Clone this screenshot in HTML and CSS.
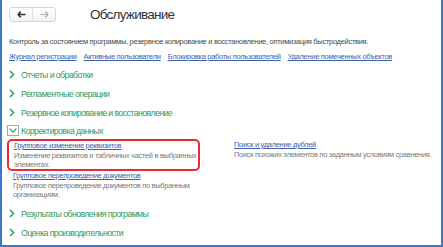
FILE: index.html
```html
<!DOCTYPE html>
<html lang="ru">
<head>
    <meta charset="UTF-8">
    <title>Обслуживание</title>
    <link rel="stylesheet" href="styles.css">
</head>
<body>
    <div class="window">
        <div class="header">
            <div class="nav">
                <span class="nav-btn">
                    <svg width="9" height="7" viewBox="0 0 9 7"><path d="M0.8 3.5H8.5M0.8 3.5L3.8 0.6M0.8 3.5L3.8 6.4" stroke="#333" stroke-width="1.5" fill="none"/></svg>
                </span>
                <span class="nav-btn">
                    <svg width="9" height="7" viewBox="0 0 9 7"><path d="M8.2 3.5H0.5M8.2 3.5L5.2 0.6M8.2 3.5L5.2 6.4" stroke="#aaa" stroke-width="1.2" fill="none"/></svg>
                </span>
            </div>
            <h1>Обслуживание</h1>
        </div>

        <p class="intro">Контроль за состоянием программы, резервное копирование и восстановление, оптимизация быстродействия.</p>

        <div class="links">
            <a href="#">Журнал регистрации</a>
            <a href="#">Активные пользователи</a>
            <a href="#">Блокировка работы пользователей</a>
            <a href="#">Удаление помеченных объектов</a>
        </div>

        <div class="group first"><svg class="chev" width="6" height="9" viewBox="0 0 6 9"><path d="M1 1L4.6 4.5L1 8" stroke="#2f9b5c" stroke-width="1.5" fill="none"/></svg>Отчеты и обработки</div>
        <div class="group"><svg class="chev" width="6" height="9" viewBox="0 0 6 9"><path d="M1 1L4.6 4.5L1 8" stroke="#2f9b5c" stroke-width="1.5" fill="none"/></svg>Регламентные операции</div>
        <div class="group"><svg class="chev" width="6" height="9" viewBox="0 0 6 9"><path d="M1 1L4.6 4.5L1 8" stroke="#2f9b5c" stroke-width="1.5" fill="none"/></svg>Резервное копирование и восстановление</div>
        <div class="group open">
            <span class="box">
                <svg width="8" height="5" viewBox="0 0 8 5"><path d="M0.7 0.7L4 4.2L7.3 0.7" stroke="#2f9b5c" stroke-width="1.2" fill="none"/></svg>
            </span>Корректировка данных
        </div>

        <div class="columns">
            <div class="col">
                <div class="item marked">
                    <a href="#">Групповое изменение реквизитов</a>
                    <p>Изменение реквизитов и табличных частей в выбранных элементах.</p>
                </div>
                <div class="item">
                    <a href="#">Групповое перепроведение документов</a>
                    <p>Групповое перепроведение документов по выбранным организациям.</p>
                </div>
            </div>
            <div class="col right">
                <div class="item">
                    <a href="#">Поиск и удаление дублей</a>
                    <p>Поиск похожих элементов по заданным условиям сравнения.</p>
                </div>
            </div>
        </div>

        <div class="group after"><svg class="chev" width="6" height="9" viewBox="0 0 6 9"><path d="M1 1L4.6 4.5L1 8" stroke="#2f9b5c" stroke-width="1.5" fill="none"/></svg>Результаты обновления программы</div>
        <div class="group"><svg class="chev" width="6" height="9" viewBox="0 0 6 9"><path d="M1 1L4.6 4.5L1 8" stroke="#2f9b5c" stroke-width="1.5" fill="none"/></svg>Оценка производительности</div>
    </div>
</body>
</html>
```

FILE: styles.css
```css
body {
    margin: 0;
    font-family: "Liberation Sans", Arial, sans-serif;
    background: #fff;
}
.window {
    width: 443px;
    height: 247px;
    box-sizing: border-box;
    border: 2px solid #3c78c8;
    border-top: none;
    padding: 0 5px;
    overflow: hidden;
}
.header {
    display: flex;
    align-items: center;
    height: 26px;
    padding-top: 1px;
}
.nav {
    display: flex;
    margin-left: 2px;
    border: 1px solid #d6d6d6;
    border-radius: 3px;
    background: linear-gradient(#fff, #f2f2f2);
}
.nav-btn {
    width: 22px;
    height: 13px;
    display: flex;
    align-items: center;
    justify-content: center;
}
.nav-btn + .nav-btn {
    border-left: 1px solid #e2e2e2;
}
h1 {
    margin: 0 0 0 34px;
    font-size: 13.5px;
    letter-spacing: -0.75px;
    font-weight: normal;
    color: #333;
}
.intro {
    margin: 10px 0 0 2px;
    font-size: 7.5px;
    letter-spacing: -0.3px;
    line-height: 10px;
    color: #4a4a4a;
    white-space: nowrap;
}
.links {
    display: flex;
    gap: 7px;
    margin: 5px 0 0 2px;
    font-size: 7.5px;
    letter-spacing: -0.3px;
    line-height: 10px;
    white-space: nowrap;
}
a {
    color: #3a5fb0;
}
.group {
    display: flex;
    align-items: center;
    height: 19px;
    font-size: 8.8px;
    letter-spacing: -0.6px;
    color: #2f9b5c;
}
.group.first {
    margin-top: 3px;
}
.chev {
    margin: 0 6px 0 2px;
}
.group.open {
    height: 17px;
}
.box {
    width: 10px;
    height: 9px;
    border: 1px solid #a8a8a8;
    display: flex;
    align-items: center;
    justify-content: center;
    margin-right: 2px;
}
.columns {
    display: flex;
    gap: 28px;
}
.col {
    width: 193px;
}
.col.right {
    flex: 1;
}
.item {
    padding: 0 0 0 6px;
    font-size: 7.5px;
    letter-spacing: -0.32px;
    line-height: 9px;
}
.item p {
    margin: 1px 0 0;
    color: #7a7a7a;
}
.marked {
    padding: 0 0 0 5px;
    border: 2px solid #ec2a30;
    border-radius: 5px;
}
.right .item {
    padding-top: 1px;
}
.group.after {
    margin-top: 5px;
}
```
